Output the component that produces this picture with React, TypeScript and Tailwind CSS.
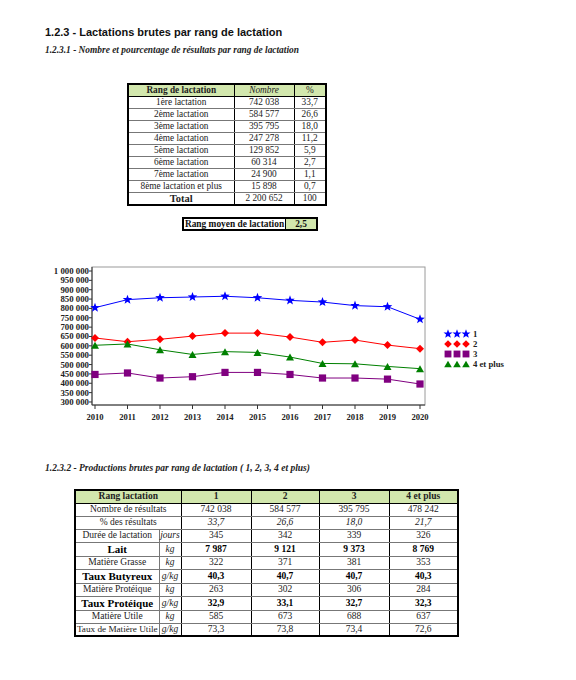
import React from "react";

const years = [2010, 2011, 2012, 2013, 2014, 2015, 2016, 2017, 2018, 2019, 2020];

const series = [
  { name: "1", color: "#0000ff", marker: "star", values: [804, 847, 857, 861, 865, 857, 843, 834, 815, 809, 742] },
  { name: "2", color: "#ff0000", marker: "diamond", values: [642, 622, 635, 652, 668, 668, 647, 619, 631, 604, 585] },
  { name: "3", color: "#800080", marker: "square", values: [447, 455, 428, 435, 458, 458, 447, 428, 428, 422, 396] },
  { name: "4 et plus", color: "#008000", marker: "triangle", values: [603, 610, 579, 554, 569, 565, 540, 506, 504, 490, 478] },
];

const rangRows = [
  ["1ère lactation", "742 038", "33,7"],
  ["2ème lactation", "584 577", "26,6"],
  ["3ème lactation", "395 795", "18,0"],
  ["4ème lactation", "247 278", "11,2"],
  ["5ème lactation", "129 852", "5,9"],
  ["6ème lactation", "60 314", "2,7"],
  ["7ème lactation", "24 900", "1,1"],
  ["8ème lactation et plus", "15 898", "0,7"],
];

type ProdRow = {
  label: string;
  unit?: string;
  values: string[];
  bold?: boolean;
  italic?: boolean;
  small?: boolean;
};

const prodRows: ProdRow[] = [
  { label: "Nombre de résultats", values: ["742 038", "584 577", "395 795", "478 242"] },
  { label: "% des résultats", values: ["33,7", "26,6", "18,0", "21,7"], italic: true },
  { label: "Durée de lactation", unit: "jours", values: ["345", "342", "339", "326"] },
  { label: "Lait", unit: "kg", values: ["7 987", "9 121", "9 373", "8 769"], bold: true },
  { label: "Matière Grasse", unit: "kg", values: ["322", "371", "381", "353"] },
  { label: "Taux Butyreux", unit: "g/kg", values: ["40,3", "40,7", "40,7", "40,3"], bold: true },
  { label: "Matière Protéique", unit: "kg", values: ["263", "302", "306", "284"] },
  { label: "Taux Protéique", unit: "g/kg", values: ["32,9", "33,1", "32,7", "32,3"], bold: true },
  { label: "Matière Utile", unit: "kg", values: ["585", "673", "688", "637"] },
  { label: "Taux de Matière Utile", unit: "g/kg", values: ["73,3", "73,8", "73,4", "72,6"], small: true },
];

const xAt = (i: number) => 95 + i * 32.5;
const yAt = (v: number) => 14 + (1000 - v) * 0.1871;

function Marker({ kind, x, y, color, s = 1 }: { kind: string; x: number; y: number; color: string; s?: number }) {
  if (kind === "star") {
    const pts: string[] = [];
    for (let k = 0; k < 10; k++) {
      const r = (k % 2 === 0 ? 5 : 2.1) * s;
      const a = -Math.PI / 2 + (k * Math.PI) / 5;
      pts.push(`${(x + r * Math.cos(a)).toFixed(2)},${(y + r * Math.sin(a)).toFixed(2)}`);
    }
    return <polygon points={pts.join(" ")} fill={color} />;
  }
  if (kind === "diamond") {
    const d = 4 * s;
    return <polygon points={`${x},${y - d} ${x + d},${y} ${x},${y + d} ${x - d},${y}`} fill={color} />;
  }
  if (kind === "square") {
    const d = 3.6 * s;
    return <rect x={x - d} y={y - d} width={d * 2} height={d * 2} fill={color} />;
  }
  const w = 4 * s;
  const h = 3.5 * s;
  return <polygon points={`${x},${y - h} ${x + w},${y + h} ${x - w},${y + h}`} fill={color} />;
}

function Chart() {
  const ticks = [];
  for (let v = 1000; v >= 300; v -= 50) ticks.push(v);
  return (
    <svg width="576" height="172" className="block" style={{ fontFamily: "'Liberation Serif', 'Times New Roman', serif" }}>
      <rect x="92" y="10" width="333" height="138" fill="#ffffff" stroke="#9a9a9a" strokeWidth="1" />
      <line x1="92" y1="10" x2="92" y2="148" stroke="#333" strokeWidth="1" />
      <line x1="92" y1="148" x2="425" y2="148" stroke="#333" strokeWidth="1" />
      {ticks.map((v) => (
        <g key={v}>
          <line x1="89" y1={yAt(v)} x2="92" y2={yAt(v)} stroke="#333" strokeWidth="1" />
          <text x="89" y={yAt(v) + 3} textAnchor="end" fontSize="8.8" fontWeight="bold" fill="#222">
            {v === 1000 ? "1 000 000" : `${v} 000`}
          </text>
        </g>
      ))}
      {years.map((yr, i) => (
        <g key={yr}>
          <line x1={xAt(i)} y1="148" x2={xAt(i)} y2="152" stroke="#333" strokeWidth="1" />
          <text x={xAt(i)} y="163" textAnchor="middle" fontSize="8.6" fontWeight="bold" fill="#222">
            {yr}
          </text>
        </g>
      ))}
      {series.map((s) => (
        <g key={s.name}>
          <polyline
            points={s.values.map((v, i) => `${xAt(i)},${yAt(v).toFixed(2)}`).join(" ")}
            fill="none"
            stroke={s.color}
            strokeWidth="1"
          />
          {s.values.map((v, i) => (
            <Marker key={i} kind={s.marker} x={xAt(i)} y={yAt(v)} color={s.color} />
          ))}
        </g>
      ))}
      {series.map((s, r) => {
        const y = 77 + r * 10;
        return (
          <g key={"l" + s.name}>
            {[448, 457, 466].map((x) => (
              <Marker key={x} kind={s.marker} x={x} y={y} color={s.color} s={0.95} />
            ))}
            <text x="473" y={y + 3} fontSize="8.7" fontWeight="bold" fill="#222">
              {s.name}
            </text>
          </g>
        );
      })}
    </svg>
  );
}

export default function App() {
  return (
    <div className="w-[576px] min-h-[680px] bg-white text-black">
      <div className="pl-[45px] pt-[25px]">
        <h1 className="font-['Liberation_Sans',Arial,sans-serif] text-[11px] leading-[14px] font-bold text-[#111]">
          1.2.3 - Lactations brutes par rang de lactation
        </h1>
        <p className="mt-[5px] font-['Liberation_Serif','Times_New_Roman',serif] text-[9.4px] leading-[12px] font-bold italic text-[#222]">
          1.2.3.1 - Nombre et pourcentage de résultats par rang de lactation
        </p>

        {/* tableau rangs */}
        <table className="ml-[82px] mt-[27px] w-[198px] table-fixed border-collapse border-2 border-black font-['Liberation_Serif','Times_New_Roman',serif] text-[9.3px] text-[#222]">
          <colgroup>
            <col className="w-[106px]" />
            <col className="w-[60px]" />
            <col className="w-[32px]" />
          </colgroup>
          <thead>
            <tr className="h-[12px] bg-[#d2e7ad] leading-[11px]">
              <th className="border border-black font-bold">Rang de lactation</th>
              <th className="border border-black font-normal italic">Nombre</th>
              <th className="border border-black font-normal">%</th>
            </tr>
          </thead>
          <tbody>
            {rangRows.map((r) => (
              <tr key={r[0]} className="h-[12px] leading-[11px]">
                <td className="border-b border-[#777] border-r border-r-black text-center">{r[0]}</td>
                <td className="border-b border-[#777] border-r border-r-black text-center">{r[1]}</td>
                <td className="border-b border-[#777] text-center">{r[2]}</td>
              </tr>
            ))}
            <tr className="h-[12px] leading-[11px]">
              <td className="border-r border-black text-center text-[10.5px] font-bold">Total</td>
              <td className="border-r border-black text-center">2 200 652</td>
              <td className="text-center">100</td>
            </tr>
          </tbody>
        </table>

        {/* rang moyen */}
        <div className="ml-[137px] mt-[11px] flex h-[14px] w-[136px] border-2 border-black font-['Liberation_Serif','Times_New_Roman',serif] text-[9.4px] font-bold leading-[10px] text-[#111]">
          <div className="flex w-[101px] items-center justify-center">Rang moyen de lactation</div>
          <div className="flex flex-1 items-center justify-center border-l border-black bg-[#d2e7ad]">2,5</div>
        </div>
      </div>

      <div className="mt-[26px]">
        <Chart />
      </div>

      <div className="pl-[45px]">
        <p className="mt-[33px] font-['Liberation_Serif','Times_New_Roman',serif] text-[9.5px] leading-[12px] font-bold italic text-[#222]">
          1.2.3.2 - Productions brutes par rang de lactation ( 1, 2, 3, 4 et plus)
        </p>

        {/* tableau productions */}
        <table className="ml-[29px] mt-[15px] w-[383px] table-fixed border-collapse border-2 border-black font-['Liberation_Serif','Times_New_Roman',serif] text-[9.5px] text-[#222]">
          <colgroup>
            <col className="w-[84px]" />
            <col className="w-[22px]" />
            <col className="w-[70px]" />
            <col className="w-[68px]" />
            <col className="w-[70px]" />
            <col className="w-[69px]" />
          </colgroup>
          <thead>
            <tr className="h-[13px] bg-[#d2e7ad] leading-[11px]">
              <th colSpan={2} className="border border-black font-bold">Rang lactation</th>
              <th className="border border-black font-bold">1</th>
              <th className="border border-black font-bold">2</th>
              <th className="border border-black font-bold">3</th>
              <th className="border border-black font-bold">4 et plus</th>
            </tr>
          </thead>
          <tbody>
            {prodRows.map((r) => (
              <tr key={r.label} className={`${r.bold ? "h-[14px]" : "h-[13px]"} leading-[11px]`}>
                {r.unit ? (
                  <>
                    <td
                      className={`border-b border-[#777] text-center whitespace-nowrap ${r.bold ? "text-[11px] font-bold text-black" : ""} ${r.small ? "text-[9.2px]" : ""}`}
                    >
                      {r.label}
                    </td>
                    <td className="border-b border-l border-[#777] border-r-[1.5px] border-r-black text-center italic">{r.unit}</td>
                  </>
                ) : (
                  <td colSpan={2} className="border-b border-[#777] border-r-[1.5px] border-r-black text-center">
                    {r.label}
                  </td>
                )}
                {r.values.map((v, i) => (
                  <td
                    key={i}
                    className={`border-b border-[#777] text-center ${i < 3 ? "border-r-[1.5px] border-r-black" : ""} ${r.bold ? "font-bold text-black" : ""} ${r.italic ? "italic" : ""}`}
                  >
                    {v}
                  </td>
                ))}
              </tr>
            ))}
          </tbody>
        </table>
      </div>
    </div>
  );
}
